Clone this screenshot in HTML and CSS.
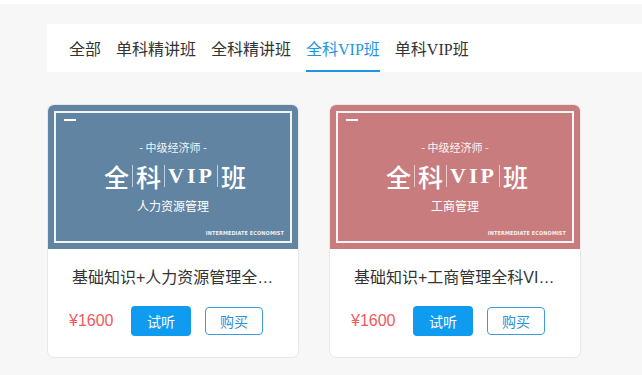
FILE: index.html
```html
<!DOCTYPE html>
<html lang="zh-CN">
<head>
<meta charset="utf-8">
<title>课程</title>
<link rel="stylesheet" href="styles.css">
</head>
<body>
<div class="topbar"></div>
<main class="page">
  <nav class="tabs">
    <a class="tab">全部</a>
    <a class="tab">单科精讲班</a>
    <a class="tab">全科精讲班</a>
    <a class="tab active">全科VIP班</a>
    <a class="tab">单科VIP班</a>
  </nav>
  <section class="cards">
    <article class="card">
      <div class="cover cover-blue">
        <div class="frame">
          <span class="dash"></span>
          <div class="kicker">- 中级经济师 -</div>
          <div class="big"><span class="ch">全</span><span class="sep"></span><span class="ch">科</span><span class="sep"></span><span class="vip">VIP</span><span class="sep"></span><span class="ch">班</span></div>
          <div class="subject">人力资源管理</div>
          <span class="en">INTERMEDIATE ECONOMIST</span>
        </div>
      </div>
      <div class="body">
        <h3 class="title">基础知识+人力资源管理全科VIP班</h3>
        <div class="actions">
          <span class="price">¥1600</span>
          <button class="btn btn-fill">试听</button>
          <button class="btn btn-line">购买</button>
        </div>
      </div>
    </article>
    <article class="card">
      <div class="cover cover-pink">
        <div class="frame">
          <span class="dash"></span>
          <div class="kicker">- 中级经济师 -</div>
          <div class="big"><span class="ch">全</span><span class="sep"></span><span class="ch">科</span><span class="sep"></span><span class="vip">VIP</span><span class="sep"></span><span class="ch">班</span></div>
          <div class="subject">工商管理</div>
          <span class="en">INTERMEDIATE ECONOMIST</span>
        </div>
      </div>
      <div class="body">
        <h3 class="title">基础知识+工商管理全科VIP班</h3>
        <div class="actions">
          <span class="price">¥1600</span>
          <button class="btn btn-fill">试听</button>
          <button class="btn btn-line">购买</button>
        </div>
      </div>
    </article>
  </section>
</main>
</body>
</html>
```
FILE: styles.css
```css
* { box-sizing: border-box; }
html, body { margin: 0; padding: 0; }
body {
  background: #f7f7f7;
  font-family: "Liberation Sans", "Noto Sans CJK SC", sans-serif;
  color: #333;
  width: 642px;
  height: 375px;
  overflow: hidden;
}
.topbar { height: 4px; background: #fff; }
.page { padding: 20px 0 0 47px; }

.tabs {
  display: flex;
  height: 48px;
  background: #fff;
  padding-left: 22px;
  gap: 15px;
  font-family: "Liberation Serif", "Noto Sans CJK SC", serif;
  font-size: 16px;
}
.tab {
  display: flex;
  align-items: center;
  color: #333;
  border-bottom: 2px solid transparent;
  padding-top: 2px;
  cursor: pointer;
}
.tab.active { color: #1f95e2; border-bottom-color: #1d95e4; }

.cards { display: flex; gap: 30px; margin-top: 32px; }
.card {
  width: 252px;
  height: 254px;
  background: #fff;
  border: 1px solid #e8e8e8;
  border-radius: 7px;
  overflow: hidden;
  display: flex;
  flex-direction: column;
}
.cover { height: 144px; padding: 6px 6px 6px 6px; color: #fff; }
.cover-blue { background: #6084a2; }
.cover-pink { background: #c97c7e; }
.frame {
  position: relative;
  height: 100%;
  border: 2px solid rgba(255,255,255,0.92);
  display: flex;
  flex-direction: column;
  align-items: center;
  padding-top: 27px;
}
.dash {
  position: absolute;
  left: 8px;
  top: 6px;
  width: 12px;
  height: 2px;
  background: #fff;
}
.kicker {
  font-family: "Noto Sans CJK SC", sans-serif;
  font-size: 11px;
  line-height: 14px;
  color: rgba(255,255,255,0.95);
}
.big {
  display: flex;
  align-items: center;
  height: 30px;
  margin-top: 7px;
  margin-left: 4px;
  font-size: 25px;
  line-height: 30px;
}
.big .ch { font-family: "Noto Sans CJK SC", sans-serif; font-weight: 500; }
.big .vip {
  font-family: "Liberation Serif", serif;
  font-weight: bold;
  font-size: 22px;
  letter-spacing: 3px;
  margin-right: -1px;
}
.big .sep {
  width: 1px;
  height: 22px;
  background: rgba(255,255,255,0.6);
  margin: 0 3px;
}
.subject {
  font-family: "Noto Sans CJK SC", sans-serif;
  font-size: 12px;
  line-height: 16px;
  margin-top: 7px;
}
.en {
  position: absolute;
  right: 6px;
  bottom: 4px;
  font-family: "DejaVu Sans Condensed", "Liberation Sans", sans-serif;
  font-weight: bold;
  font-size: 5.5px;
  line-height: 7px;
  letter-spacing: 0.1px;
  color: rgba(255,255,255,0.9);
}

.body { padding: 17px 22px 0 24px; }
.title {
  margin: 0;
  font-size: 16px;
  font-weight: normal;
  line-height: 24px;
  color: #333;
  white-space: nowrap;
  overflow: hidden;
  text-overflow: ellipsis;
}
.actions {
  display: flex;
  align-items: center;
  height: 30px;
  margin-top: 16px;
  margin-left: -3px;
}
.price { color: #ef5a5c; font-size: 16px; width: 44px; }
.btn {
  font-family: "Noto Sans CJK SC", sans-serif;
  font-size: 14px;
  border-radius: 4px;
  padding: 0;
  cursor: pointer;
}
.btn-fill {
  width: 60px;
  height: 30px;
  margin-left: 18px;
  background: #0f9cf0;
  border: none;
  color: #fff;
}
.btn-line {
  width: 58px;
  height: 28px;
  margin-left: 14px;
  background: #fff;
  border: 1px solid #3b9bdc;
  color: #2f8fd6;
}
```
